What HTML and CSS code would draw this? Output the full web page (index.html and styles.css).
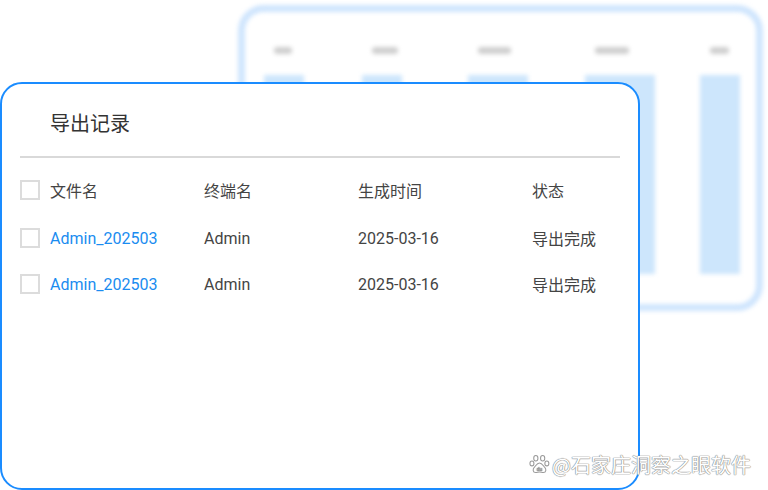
FILE: index.html
```html
<!DOCTYPE html>
<html lang="zh-CN">
<head>
    <meta charset="UTF-8">
    <meta name="viewport" content="width=device-width, initial-scale=1.0">
    <title>导出记录</title>
    <link rel="stylesheet" href="styles.css">
</head>
<body>
    <div class="stage">
        <!-- blurred chart card behind -->
        <div class="back-card">
            <div class="back-row labels">
                <span class="blob w18"></span>
                <span class="blob w26"></span>
                <span class="blob w33"></span>
                <span class="blob w34"></span>
                <span class="blob w19"></span>
            </div>
            <div class="back-row bars">
                <span class="bar w40"></span>
                <span class="bar w40"></span>
                <span class="bar w60"></span>
                <span class="bar w70"></span>
                <span class="bar w40"></span>
            </div>
        </div>

        <div class="export-card">
            <h2 class="title">导出记录</h2>
            <div class="divider"></div>
            <div class="table">
                <div class="row head">
                    <span class="check"></span>
                    <span class="col c1">文件名</span>
                    <span class="col c2">终端名</span>
                    <span class="col c3">生成时间</span>
                    <span class="col c4">状态</span>
                </div>
                <div class="row">
                    <span class="check"></span>
                    <span class="col c1"><a href="#">Admin_202503</a></span>
                    <span class="col c2">Admin</span>
                    <span class="col c3">2025-03-16</span>
                    <span class="col c4">导出完成</span>
                </div>
                <div class="row">
                    <span class="check"></span>
                    <span class="col c1"><a href="#">Admin_202503</a></span>
                    <span class="col c2">Admin</span>
                    <span class="col c3">2025-03-16</span>
                    <span class="col c4">导出完成</span>
                </div>
            </div>
        </div>

        <div class="watermark">
            <svg class="paw" width="21" height="21" viewBox="0 0 20 20">
                <g fill="#fff" stroke="#9a9a9a" stroke-width="1">
                    <ellipse cx="6.5" cy="4" rx="2" ry="2.6"/>
                    <ellipse cx="13" cy="4" rx="2" ry="2.6"/>
                    <ellipse cx="2.8" cy="9" rx="1.9" ry="2.3"/>
                    <ellipse cx="17" cy="9" rx="1.9" ry="2.3"/>
                    <path d="M10 8.5c-2.5 0-3.4 2.6-5 4.2-1.5 1.6-1.6 5 1.4 5 1.3 0 2.3-.5 3.6-.5s2.3.5 3.6.5c3 0 2.9-3.4 1.4-5-1.6-1.6-2.5-4.2-5-4.2z"/>
                </g>
                <text x="10" y="16" font-size="4.5" text-anchor="middle" fill="#9a9a9a" font-family="Roboto, sans-serif">du</text>
            </svg>
            <span>@石家庄洞察之眼软件</span>
        </div>
    </div>
</body>
</html>
```

FILE: styles.css
```css
body {
    margin: 0;
    padding: 0;
    background-color: #fff;
    font-family: Roboto, "Noto Sans CJK SC", sans-serif;
    color: #444;
}

.stage {
    position: relative;
    width: 768px;
    height: 490px;
    overflow: hidden;
}

/* background card, blurred */
.back-card {
    position: absolute;
    left: 238px;
    top: 5px;
    width: 511px;
    height: 292px;
    border: 7px solid #cfe5fd;
    border-radius: 26px;
    filter: blur(2px);
    display: flex;
    flex-direction: column;
}

.back-row {
    display: grid;
    grid-template-columns: 98px 106px 117px 115px 80px;
    padding-left: 19px;
}

.back-row.labels {
    margin-top: 34px;
    height: 8px;
    align-items: center;
}

.back-row.bars {
    margin-top: 21px;
    flex: 1;
    margin-bottom: 30px;
}

.blob {
    display: block;
    height: 7px;
    background-color: #cfcfcf;
    border-radius: 3px;
    margin-left: 10px;
}

.bar {
    display: block;
    background-color: #cde6fc;
}

.w18 { width: 18px; }
.w19 { width: 19px; }
.w26 { width: 26px; }
.w33 { width: 33px; }
.w34 { width: 34px; }
.w40 { width: 40px; }
.w60 { width: 60px; }
.w70 { width: 70px; }

/* front card */
.export-card {
    position: relative;
    margin-top: 82px;
    width: 636px;
    height: 404px;
    background-color: #fff;
    border: 2px solid #1a8cff;
    border-radius: 22px;
    box-sizing: content-box;
}

.title {
    margin: 0;
    padding: 26px 0 0 48px;
    height: 46px;
    font-size: 20px;
    font-weight: normal;
    line-height: 28px;
    color: #333;
}

.divider {
    margin: 0 18px 0 18px;
    height: 2px;
    background-color: #d9d9d9;
}

.table {
    padding: 12px 0 0 18px;
}

.row {
    display: flex;
    align-items: center;
    height: 46px;
    font-size: 16px;
    color: #444;
}

.row.head {
    height: 40px;
    margin-bottom: 5px;
}

.check {
    width: 16px;
    height: 16px;
    border: 2px solid #dcdcdc;
    margin-right: 10px;
    flex-shrink: 0;
}

.col.c1 { width: 154px; }
.col.c2 { width: 154px; }
.col.c3 { width: 174px; }
.col.c4 { width: 90px; }

.col a {
    color: #1a8cf0;
    text-decoration: none;
}

/* watermark */
.watermark {
    position: absolute;
    left: 529px;
    top: 450px;
    display: flex;
    align-items: center;
    gap: 2px;
    font-family: "Noto Sans CJK SC", sans-serif;
    font-size: 20px;
    color: #fff;
    text-shadow: 0 0 1px #888, 0 0 1px #888, 0 0 1px #888;
    white-space: nowrap;
}

.paw {
    display: block;
}
```
